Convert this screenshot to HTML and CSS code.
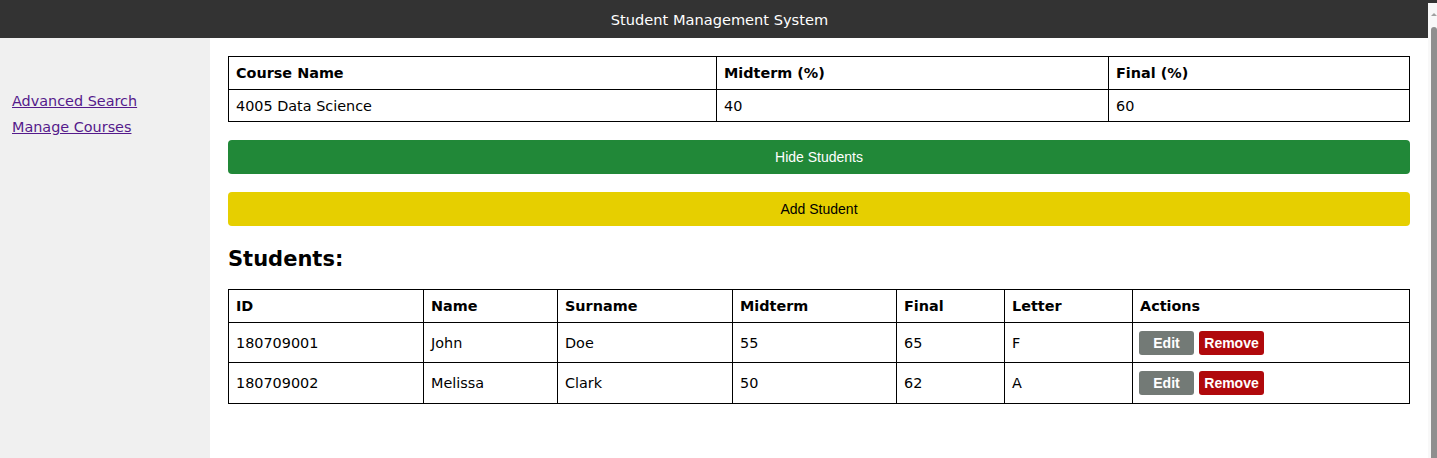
FILE: index.html
```html
<!DOCTYPE html>
<html lang="en">
<head>
<meta charset="utf-8">
<title>Student Management System</title>
<link rel="stylesheet" href="styles.css">
</head>
<body>
<div class="app">
  <header class="topbar">Student Management System</header>
  <div class="layout">
    <nav class="sidebar">
      <a href="#" class="navlink">Advanced Search</a>
      <a href="#" class="navlink">Manage Courses</a>
    </nav>
    <main class="content">
      <table class="grid course-table">
        <thead>
          <tr>
            <th class="c-name">Course Name</th>
            <th class="c-mid">Midterm (%)</th>
            <th class="c-final">Final (%)</th>
          </tr>
        </thead>
        <tbody>
          <tr>
            <td>4005 Data Science</td>
            <td>40</td>
            <td>60</td>
          </tr>
        </tbody>
      </table>
      <button class="wide-btn btn-green">Hide Students</button>
      <button class="wide-btn btn-yellow">Add Student</button>
      <h2 class="section-title">Students:</h2>
      <table class="grid student-table">
        <thead>
          <tr>
            <th class="s-id">ID</th>
            <th class="s-name">Name</th>
            <th class="s-surname">Surname</th>
            <th class="s-mid">Midterm</th>
            <th class="s-final">Final</th>
            <th class="s-letter">Letter</th>
            <th class="s-actions">Actions</th>
          </tr>
        </thead>
        <tbody>
          <tr>
            <td>180709001</td>
            <td>John</td>
            <td>Doe</td>
            <td>55</td>
            <td>65</td>
            <td>F</td>
            <td class="actions"><button class="sm-btn btn-edit">Edit</button><button class="sm-btn btn-remove">Remove</button></td>
          </tr>
          <tr class="last-row">
            <td>180709002</td>
            <td>Melissa</td>
            <td>Clark</td>
            <td>50</td>
            <td>62</td>
            <td>A</td>
            <td class="actions"><button class="sm-btn btn-edit">Edit</button><button class="sm-btn btn-remove">Remove</button></td>
          </tr>
        </tbody>
      </table>
    </main>
  </div>
</div>
<div class="fake-scrollbar"><span class="sb-arrow"></span><span class="sb-thumb"></span></div>
</body>
</html>
```

FILE: styles.css
```css
html, body {
  margin: 0;
  padding: 0;
  height: 100%;
  overflow: hidden;
}
body {
  font-family: "DejaVu Sans", Verdana, sans-serif;
  font-size: 14.4px;
  color: #000;
  background: #fff;
}
.app {
  width: 1428px;
  height: 100%;
  display: flex;
  flex-direction: column;
}
.topbar {
  width: 1437px;
  height: 38px;
  background: #333333;
  color: #fff;
  display: flex;
  align-items: center;
  justify-content: center;
  font-size: 14.6px;
  flex: none;
  padding-left: 2px;
  box-sizing: border-box;
}
.layout {
  flex: 1;
  display: flex;
}
.sidebar {
  width: 210px;
  flex: none;
  background: #f0f0f0;
  padding: 54px 12px 0;
  box-sizing: border-box;
  display: flex;
  flex-direction: column;
  align-items: flex-start;
  gap: 8px;
}
.navlink {
  color: #551a8b;
  text-decoration: underline;
  font-size: 14.4px;
  line-height: 18px;
}
.content {
  flex: 1;
  padding: 18px 18px 0;
  display: flex;
  flex-direction: column;
}
.grid {
  border-collapse: collapse;
  width: 100%;
  table-layout: fixed;
}
.grid th, .grid td {
  border: 1px solid #000;
  padding: 0 7px;
  text-align: left;
  height: 33px;
  box-sizing: border-box;
}
.course-table td {
  height: 32px;
}
.grid th {
  font-weight: bold;
}
.c-name { width: 488px; }
.c-mid { width: 392px; }
.c-final { width: 301px; }
.wide-btn {
  margin-top: 18px;
  height: 34px;
  border: none;
  border-radius: 4px;
  font-family: "Liberation Sans", Arial, sans-serif;
  font-size: 14px;
  width: 100%;
}
.btn-green {
  background: #218838;
  color: #fff;
}
.btn-yellow {
  background: #e6cf00;
  color: #000;
}
.section-title {
  margin: 20px 0 17px;
  font-size: 21px;
  font-weight: bold;
  line-height: 26px;
}
.student-table td {
  height: 40px;
}
.student-table .last-row td {
  height: 41px;
}
.s-id { width: 195px; }
.s-name { width: 134px; }
.s-surname { width: 175px; }
.s-mid { width: 164px; }
.s-final { width: 108px; }
.s-letter { width: 128px; }
.s-actions { width: 277px; }
.grid td.actions {
  padding-left: 6px;
}
.sm-btn {
  height: 24px;
  border: none;
  border-radius: 3px;
  color: #fff;
  font-family: "Liberation Sans", Arial, sans-serif;
  font-weight: bold;
  font-size: 14px;
  padding: 0 4px;
  vertical-align: middle;
}
.btn-edit {
  background: #737a76;
  width: 55px;
  margin-right: 5px;
}
.btn-remove {
  background: #b0090c;
  width: 65px;
}
.fake-scrollbar {
  position: fixed;
  top: 3px;
  right: 0;
  width: 9px;
  bottom: 0;
  background: #f8f8f8;
}
.sb-arrow {
  position: absolute;
  top: 10px;
  left: 3px;
  width: 0;
  height: 0;
  border-left: 3px solid transparent;
  border-right: 3px solid transparent;
  border-bottom: 3px solid #a0a0a0;
}
.sb-thumb {
  position: absolute;
  top: 24px;
  left: 3px;
  right: 0;
  bottom: 0;
  background: #8f8f8f;
  border-radius: 3px 3px 0 0;
}
```
